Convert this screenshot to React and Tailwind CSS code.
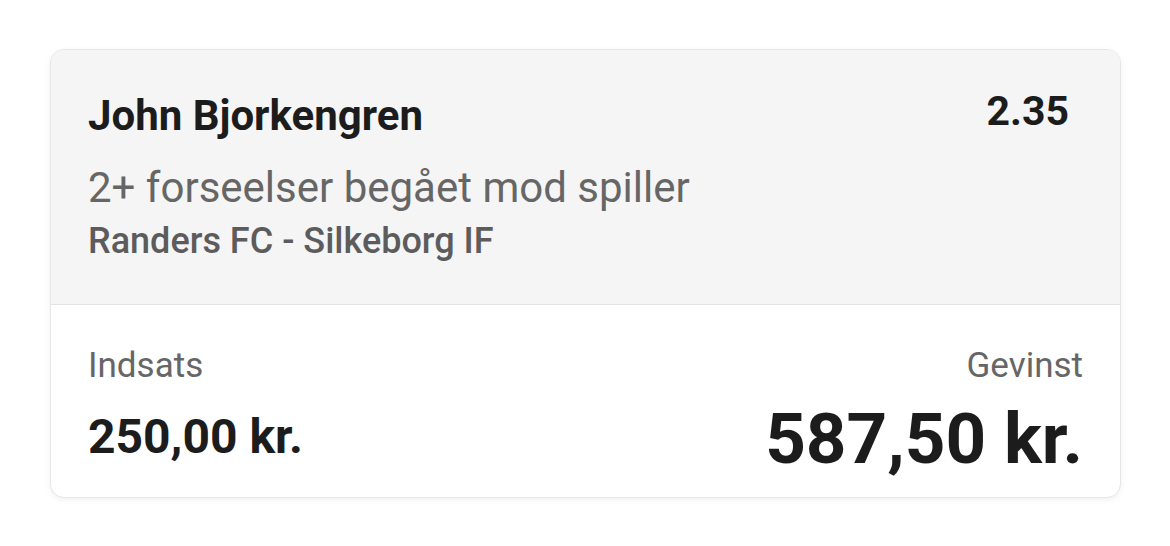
export default function App() {
  return (
    <div className="min-h-screen bg-white pt-[49px] px-[50px] font-['Roboto',sans-serif]">
      <div className="w-[1071px] rounded-[14px] border border-[#e6e6e6] bg-white shadow-[0_2px_6px_rgba(0,0,0,0.06)] overflow-hidden">
        {/* bet selection */}
        <div className="h-[255px] bg-[#f5f5f5] border-b border-[#e4e4e4] pl-[37px] pr-[51px] pt-[41px]">
          <div className="flex items-start justify-between">
            <div className="text-[42px] leading-[50px] font-bold text-[#1c1c1c]">John Bjorkengren</div>
            <div className="text-[41px] leading-[40px] font-bold text-[#1c1c1c]">2.35</div>
          </div>
          <div className="mt-[22px] text-[42px] leading-[50px] text-[#666666]">2+ forseelser begået mod spiller</div>
          <div className="mt-[6px] text-[36px] leading-[44px] font-medium text-[#5c5c5c]">Randers FC - Silkeborg IF</div>
        </div>
        {/* stake and payout */}
        <div className="h-[192px] flex items-start justify-between px-[37px] pt-[39px]">
          <div>
            <div className="text-[35px] leading-[44px] text-[#666666]">Indsats</div>
            <div className="mt-[21px] text-[48px] leading-[56px] font-bold text-[#1c1c1c]">250,00 kr.</div>
          </div>
          <div className="text-right">
            <div className="text-[35px] leading-[44px] text-[#666666]">Gevinst</div>
            <div className="mt-[11px] text-[71px] leading-[80px] font-bold text-[#1c1c1c]">587,50 kr.</div>
          </div>
        </div>
      </div>
    </div>
  );
}
